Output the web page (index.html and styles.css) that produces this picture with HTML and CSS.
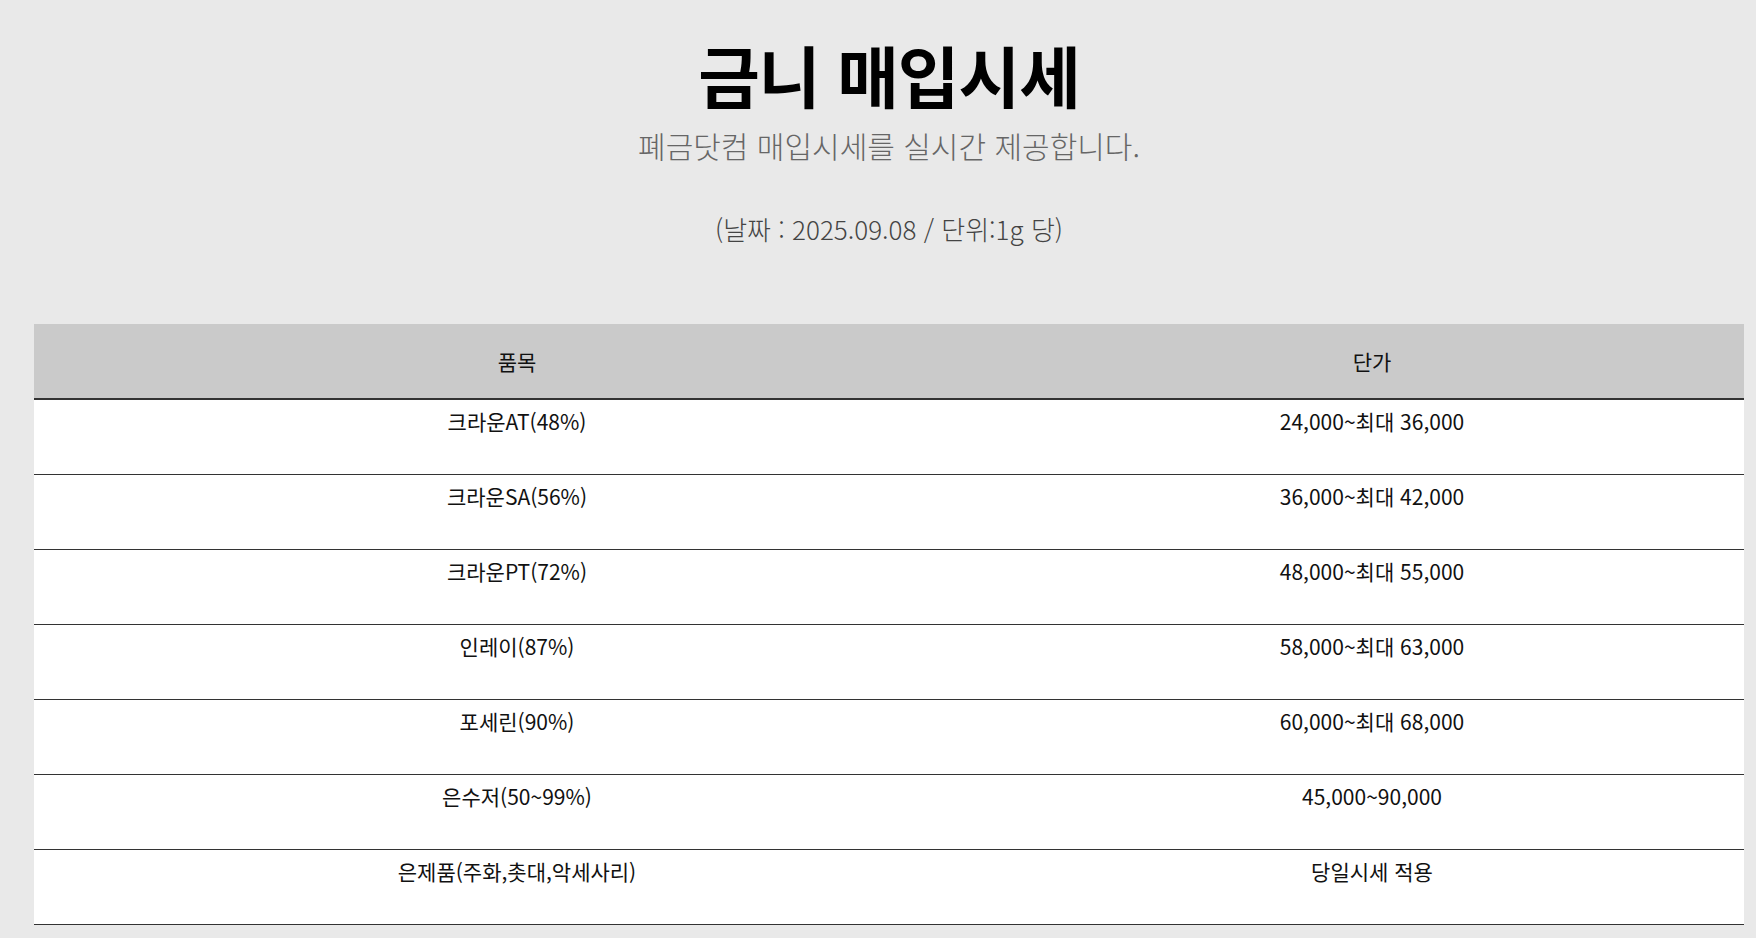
FILE: index.html
```html
<!DOCTYPE html>
<html lang="ko">
<head>
<meta charset="utf-8">
<title>금니 매입시세</title>
<link rel="stylesheet" href="styles.css">
</head>
<body>
<div class="page">
  <header class="intro">
    <h1 class="title">금니 매입시세</h1>
    <p class="subtitle">폐금닷컴 매입시세를 실시간 제공합니다.</p>
    <p class="date">(날짜 : 2025.09.08 / 단위:1g 당)</p>
  </header>
  <table class="price-table">
    <colgroup>
      <col class="col-item">
      <col class="col-price">
    </colgroup>
    <thead>
      <tr><th>품목</th><th>단가</th></tr>
    </thead>
    <tbody>
      <tr><td>크라운AT(48%)</td><td>24,000~최대 36,000</td></tr>
      <tr><td>크라운SA(56%)</td><td>36,000~최대 42,000</td></tr>
      <tr><td>크라운PT(72%)</td><td>48,000~최대 55,000</td></tr>
      <tr><td>인레이(87%)</td><td>58,000~최대 63,000</td></tr>
      <tr><td>포세린(90%)</td><td>60,000~최대 68,000</td></tr>
      <tr><td>은수저(50~99%)</td><td>45,000~90,000</td></tr>
      <tr><td>은제품(주화,촛대,악세사리)</td><td>당일시세 적용</td></tr>
    </tbody>
  </table>
</div>
</body>
</html>
```

FILE: styles.css
```css
html, body {
  margin: 0;
  padding: 0;
}
body {
  background: #e9e9e9;
  font-family: "Noto Sans CJK KR", "Noto Sans", sans-serif;
  color: #111;
}
.page {
  padding: 0 12px 0 34px;
}
.intro {
  text-align: center;
  padding-top: 34px;
}
.title {
  margin: 0;
  font-size: 67px;
  line-height: 80px;
  font-weight: 700;
  color: #000;
  letter-spacing: -1px;
}
.subtitle {
  margin: 11px 0 0;
  font-size: 30px;
  line-height: 40px;
  font-weight: 300;
  color: #666;
}
.date {
  margin: 46px 0 0;
  font-size: 26px;
  line-height: 36px;
  font-weight: 300;
  color: #444;
}
.price-table {
  margin-top: 77px;
  width: 100%;
  border-collapse: collapse;
  font-size: 21px;
}
.col-item { width: 966px; }
.col-price { width: 744px; }
.price-table th {
  background: #cacaca;
  height: 74px;
  font-weight: 400;
  color: #111;
  border-bottom: 2px solid #333;
  padding: 0;
  vertical-align: middle;
}
.price-table td {
  background: #fff;
  height: 75px;
  box-sizing: border-box;
  padding: 7px 0 0;
  line-height: 28px;
  text-align: center;
  vertical-align: top;
  border-bottom: 1px solid #333;
}
```
